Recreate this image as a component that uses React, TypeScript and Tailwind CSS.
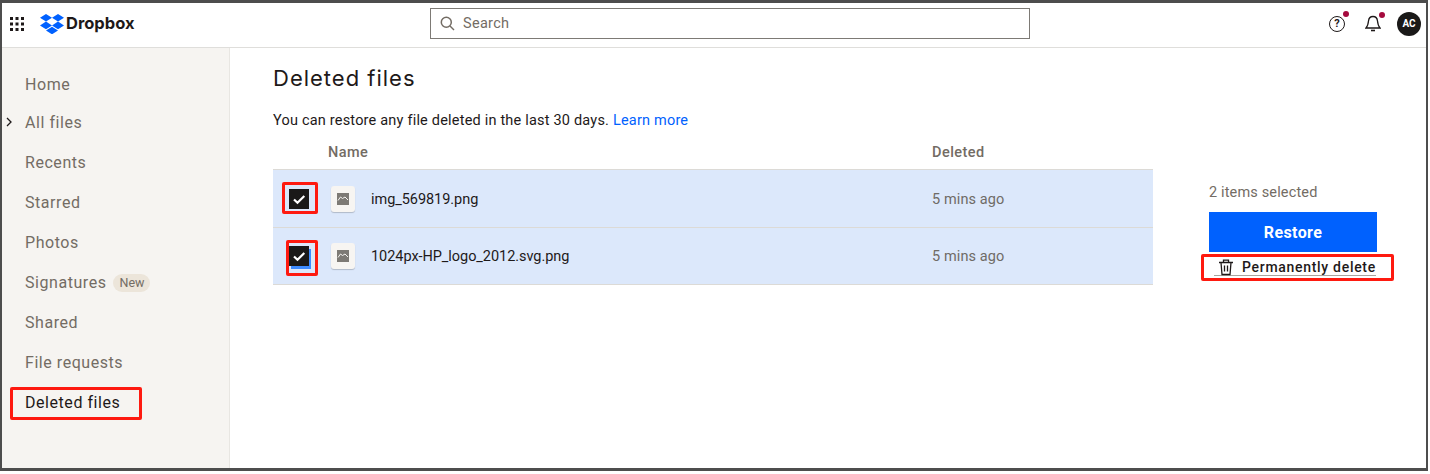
import React from "react";

const font = { fontFamily: "Roboto, 'Liberation Sans', sans-serif" };

function FileIcon() {
  return (
    <div className="flex h-[26px] w-6 items-center justify-center rounded-[3px] bg-[#f7f5f2] shadow-[0_1px_1px_rgba(0,0,0,0.2)]">
      <svg width="12" height="12" viewBox="0 0 12 12">
        <rect width="12" height="12" fill="#7d7a75" />
        <path d="M1 7.5 L3.5 4 L5.5 5.5 L8 4 L11 7" fill="none" stroke="#f7f5f2" strokeWidth="1" />
      </svg>
    </div>
  );
}

function Check({ focus }: { focus?: boolean }) {
  return (
    <div className={`relative h-5 w-5 bg-[#1a1918] ${focus ? "shadow-[2px_3px_0_#3d8bff]" : ""}`}>
      <svg width="20" height="20" viewBox="0 0 20 20" className="absolute inset-0">
        <path d="M5 10.5 L8.5 13.8 L15.3 7" fill="none" stroke="#fff" strokeWidth="2.2" />
      </svg>
    </div>
  );
}

function Row({ name, focus, boxClass, h }: { name: string; focus?: boolean; boxClass: string; h: string }) {
  return (
    <div className={`relative flex items-center border-b border-[#dcdad6] bg-[#dce8fb] text-[14.5px] text-[#1e1919] ${h}`}>
      <div className="ml-4 w-[42px]">
        <Check focus={focus} />
      </div>
      <FileIcon />
      <span className="ml-4 w-[561px] pt-[2px] tracking-[-0.05px]">{name}</span>
      <span className="pt-[2px] tracking-[0.1px] text-[#6f6b66]">5 mins ago</span>
      <div className={`absolute rounded-[2px] border-[3px] border-[#fe1a10] ${boxClass}`} />
    </div>
  );
}

const nav = [
  ["Home", "h-[37px]"],
  ["All files", "h-[40px]"],
  ["Recents", "h-[40px]"],
  ["Starred", "h-[40px]"],
  ["Photos", "h-[40px]"],
  ["Signatures", "h-[40px]"],
  ["Shared", "h-[40px]"],
  ["File requests", "h-[40px]"],
];

export default function App() {
  return (
    <div className="h-[474px] w-[1430px] overflow-hidden bg-white" style={font}>
      <div className="flex h-[471px] w-[1428px] flex-col border-x-2 border-t-[3px] border-b-[3px] border-[#4d4d4d]">
        <header className="flex h-[45px] shrink-0 items-center border-b border-[#dfdedb] bg-white pb-[3px]">
          <svg width="16" height="16" viewBox="0 0 16 16" className="ml-[7px]" fill="#1e1919">
            {[1, 6.5, 12].map((x) =>
              [1, 6.5, 12].map((y) => <rect key={`${x}-${y}`} x={x} y={y} width="3" height="3" />)
            )}
          </svg>
          <svg width="24" height="20" viewBox="0 0 24 20" className="ml-[15px]" fill="#0061ff">
            <path d="M6 0 L12 3.8 L6 7.6 L0 3.8 Z M18 0 L24 3.8 L18 7.6 L12 3.8 Z M0 11.4 L6 7.6 L12 11.4 L6 15.2 Z M18 7.6 L24 11.4 L18 15.2 L12 11.4 Z M6 16.5 L12 12.7 L18 16.5 L12 20.3 Z" />
          </svg>
          <span className="ml-[2px] w-[70px] text-[16.5px] font-bold tracking-[0px] text-[#1e1919]" style={{ fontFamily: "Inter, sans-serif" }}>
            Dropbox
          </span>
          <div className="ml-[294px] flex h-[31px] w-[600px] items-center border border-[#7d7a75] bg-white pl-[9px] text-[14.5px] tracking-[0.3px] text-[#736c64]">
            <svg width="15" height="15" viewBox="0 0 15 15" fill="none" stroke="#736c64" strokeWidth="1.5">
              <circle cx="6.3" cy="6.3" r="5" />
              <path d="M10 10 L14 14" />
            </svg>
            <span className="ml-[8px]">Search</span>
          </div>
          <div className="relative ml-[299px] h-4 w-4 rounded-full border-[1.5px] border-[#1e1919] text-center text-[11px] font-bold leading-[13px] text-[#1e1919]">
            ?
            <div className="absolute -right-[5px] -top-[6px] h-[6px] w-[6px] rounded-full bg-[#a50a3e]" />
          </div>
          <div className="relative ml-[20px] h-[18px] w-4">
            <svg width="16" height="18" viewBox="0 0 16 18" fill="none" stroke="#1e1919" strokeWidth="1.3">
              <path d="M1 13 C3 11 3.2 9 3.5 6 C3.8 3 5.5 1.5 8 1.5 C10.5 1.5 12.2 3 12.5 6 C12.8 9 13 11 15 13 Z" />
              <path d="M6 15.5 H10" strokeWidth="1.6" />
            </svg>
            <div className="absolute -right-[4px] -top-[3px] h-[6px] w-[6px] rounded-full bg-[#a50a3e]" />
          </div>
          <div className="ml-[16px] flex h-6 w-6 items-center justify-center rounded-full bg-[#1a1918] text-[10px] font-bold text-white">
            AC
          </div>
        </header>
        <div className="flex min-h-0 flex-1">
          <aside className="w-[228px] shrink-0 border-r border-[#e8e6e2] bg-[#f6f4f1] pt-[18px] text-[16px] tracking-[0.55px] text-[#736c64]">
            {nav.map(([label, h]) => (
              <div key={label} className={`relative flex items-center pl-[23px] ${h}`}>
                {label === "All files" && (
                  <svg width="8" height="10" viewBox="0 0 8 10" fill="none" stroke="#1e1919" strokeWidth="1.3" className="absolute left-[3px] top-[14px]">
                    <path d="M2 1 L6 5 L2 9" />
                  </svg>
                )}
                <span>{label}</span>
                {label === "Signatures" && (
                  <span className="ml-[7px] rounded-full bg-[#ece5da] px-[6px] text-[12.5px] leading-[18px] tracking-normal text-[#736c64]">New</span>
                )}
              </div>
            ))}
            <div className="relative flex h-[40px] items-center pl-[23px] text-[#1e1919]">
              Deleted files
              <div className="absolute left-[8px] top-[4px] h-[33px] w-[132px] rounded-[2px] border-[3px] border-[#fe1a10]" />
            </div>
          </aside>
          <main className="flex min-w-0 flex-1 pl-[43px]">
            <div className="w-[880px]">
              <h1 className="mt-[15px] text-[22px] font-normal leading-[30px] tracking-[1px] text-[#1e1919]" style={{ fontFamily: "Inter, sans-serif" }}>
                Deleted files
              </h1>
              <p className="mt-[18px] text-[14.5px] leading-[20px] tracking-[0.2px] text-[#1e1919]">
                You can restore any file deleted in the last 30 days. <span className="text-[#0061fe]">Learn more</span>
              </p>
              <div className="mt-[2px] flex h-[37px] items-center border-b border-[#dcdad6] pt-[3px] text-[14.5px] font-medium tracking-[0.45px] text-[#736c64]">
                <span className="ml-[55px] w-[604px]">Name</span>
                <span>Deleted</span>
              </div>
              <Row name="img_569819.png" h="h-[58px]" boxClass="left-[9px] top-[12px] h-[32px] w-[36px]" />
              <Row name="1024px-HP_logo_2012.svg.png" focus h="h-[57px]" boxClass="left-[13px] top-[12px] h-[36px] w-[32px]" />
            </div>
            <div className="ml-[56px] w-[168px] pt-[135px]">
              <div className="text-[14.5px] leading-[20px] tracking-[0.15px] text-[#736c64]">2 items selected</div>
              <button className="mt-[9px] flex h-10 w-[168px] items-center justify-center bg-[#0061fe] pt-[1px] text-[16px] font-bold tracking-[0.4px] text-white">
                Restore
              </button>
              <div className="relative mt-[3px] flex h-[22px] items-center text-[14px] font-medium text-[#1e1919]">
                <div className="ml-[5px] flex h-[20px] w-[162px] items-center border-b border-[#a8a5a0] pl-[4px] pt-[3px]">
                  <svg width="16" height="17" viewBox="0 0 16 17" fill="none" stroke="#1e1919" strokeWidth="1.3">
                    <path d="M1 3.5 H15 M5.5 3.5 V1.2 H10.5 V3.5 M3 3.5 L4 15.5 H12 L13 3.5 M6.5 6.5 V12.5 M9.5 6.5 V12.5" />
                  </svg>
                  <span className="ml-[8px] whitespace-nowrap tracking-[0.7px]">Permanently delete</span>
                </div>
                <div className="absolute -left-[8px] -top-[1px] h-[27px] w-[193px] rounded-[2px] border-[3px] border-[#fe1a10]" />
              </div>
            </div>
          </main>
        </div>
      </div>
    </div>
  );
}
